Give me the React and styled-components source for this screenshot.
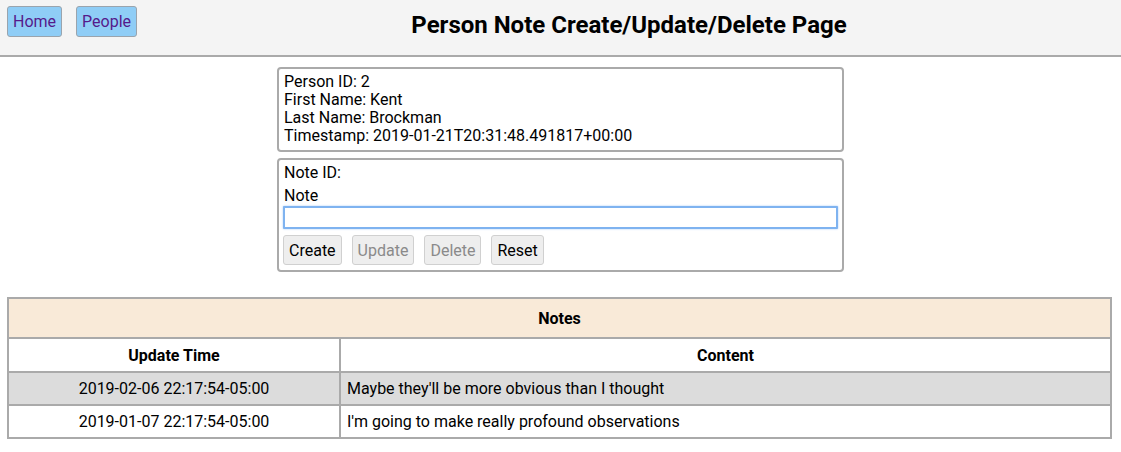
import React from "react";
import styled, { createGlobalStyle } from "styled-components";

const GlobalStyle = createGlobalStyle`
  body {
    margin: 0;
    background: #fff;
    font-family: Roboto, "Liberation Sans", sans-serif;
    font-size: 16px;
    color: #000;
  }
`;

const Page = styled.div`
  display: flex;
  flex-flow: column;
`;

const Header = styled.header`
  height: 55px;
  padding: 0 0 0 7px;
  display: flex;
  align-items: flex-start;
  background: #f4f4f4;
  border-bottom: 2px solid #aaa;
`;

const NavLinks = styled.nav`
  display: flex;
  gap: 14px;
  padding-top: 6px;
`;

const NavLink = styled.a`
  height: 31px;
  padding: 0 5px;
  display: flex;
  align-items: center;
  box-sizing: border-box;
  background: #8fcdf6;
  border: 1px solid #9aa4ad;
  border-radius: 3px;
  color: #551a8b;
  text-decoration: none;
  font-size: 16px;
`;

const Title = styled.h1`
  flex: 1;
  margin: 0;
  padding-top: 11px;
  text-align: center;
  font-size: 24px;
  font-weight: 700;
`;

const Content = styled.main`
  display: flex;
  flex-flow: column;
  align-items: center;
  gap: 6px;
  padding-top: 10px;
`;

const Box = styled.section`
  width: 567px;
  box-sizing: border-box;
  padding: 4px 6px 5px 5px;
  border: 2px solid #aaa;
  border-radius: 4px;
  line-height: 18px;
`;

const Line = styled.div`
  margin-bottom: ${(p) => p.$gap || 0}px;
`;

const NoteInput = styled.input`
  display: block;
  width: calc(100% + 3px);
  height: 23px;
  margin: 1px 0 0 -1px;
  box-sizing: border-box;
  border: 2px solid #7fb3f0;
  border-radius: 1px;
  box-shadow: 0 0 2px #9cc4f5;
  outline: none;
  font: inherit;
  padding: 0 3px;
`;

const Buttons = styled.div`
  display: flex;
  gap: 10px;
  margin: 6px 0 0 -1px;
`;

const Button = styled.button`
  height: 30px;
  padding: 0 5px;
  background: #eee;
  border: 1px solid #d0d0d0;
  border-radius: 3px;
  font-family: Roboto, "Liberation Sans", sans-serif;
  font-size: 16px;
  color: #000;
  &:disabled {
    color: #8a8a8a;
  }
`;

const Table = styled.table`
  margin: 25px 9px 0 7px;
  border-collapse: collapse;
  border: 2px solid #aaa;
  font-size: 16px;
`;

const Caption = styled.th`
  height: 36px;
  background: #f9ead8;
  border: 2px solid #aaa;
  font-size: 16px;
`;

const HeadCell = styled.th`
  height: 30px;
  border: 2px solid #aaa;
  font-size: 16px;
  width: ${(p) => p.$width || "auto"};
`;

const Row = styled.tr`
  background: ${(p) => (p.$shaded ? "#dcdcdc" : "#fff")};
`;

const Cell = styled.td`
  height: 31px;
  padding: 0 6px;
  border: 2px solid #aaa;
  text-align: ${(p) => (p.$center ? "center" : "left")};
`;

const notes = [
  { time: "2019-02-06 22:17:54-05:00", text: "Maybe they'll be more obvious than I thought" },
  { time: "2019-01-07 22:17:54-05:00", text: "I'm going to make really profound observations" },
];

export default function App() {
  return (
    <Page>
      <GlobalStyle />
      <Header>
        <NavLinks>
          <NavLink href="#">Home</NavLink>
          <NavLink href="#">People</NavLink>
        </NavLinks>
        <Title>Person Note Create/Update/Delete Page</Title>
      </Header>
      <Content>
        <Box>
          <Line>Person ID: 2</Line>
          <Line>First Name: Kent</Line>
          <Line>Last Name: Brockman</Line>
          <Line>Timestamp: 2019-01-21T20:31:48.491817+00:00</Line>
        </Box>
        <Box>
          <Line $gap={5}>Note ID:</Line>
          <Line>Note</Line>
          <NoteInput autoFocus />
          <Buttons>
            <Button>Create</Button>
            <Button disabled>Update</Button>
            <Button disabled>Delete</Button>
            <Button>Reset</Button>
          </Buttons>
        </Box>
      </Content>
      <Table>
        <thead>
          <tr>
            <Caption colSpan={2}>Notes</Caption>
          </tr>
          <tr>
            <HeadCell $width="328px">Update Time</HeadCell>
            <HeadCell>Content</HeadCell>
          </tr>
        </thead>
        <tbody>
          {notes.map((n, i) => (
            <Row key={i} $shaded={i % 2 === 0}>
              <Cell $center>{n.time}</Cell>
              <Cell>{n.text}</Cell>
            </Row>
          ))}
        </tbody>
      </Table>
    </Page>
  );
}
